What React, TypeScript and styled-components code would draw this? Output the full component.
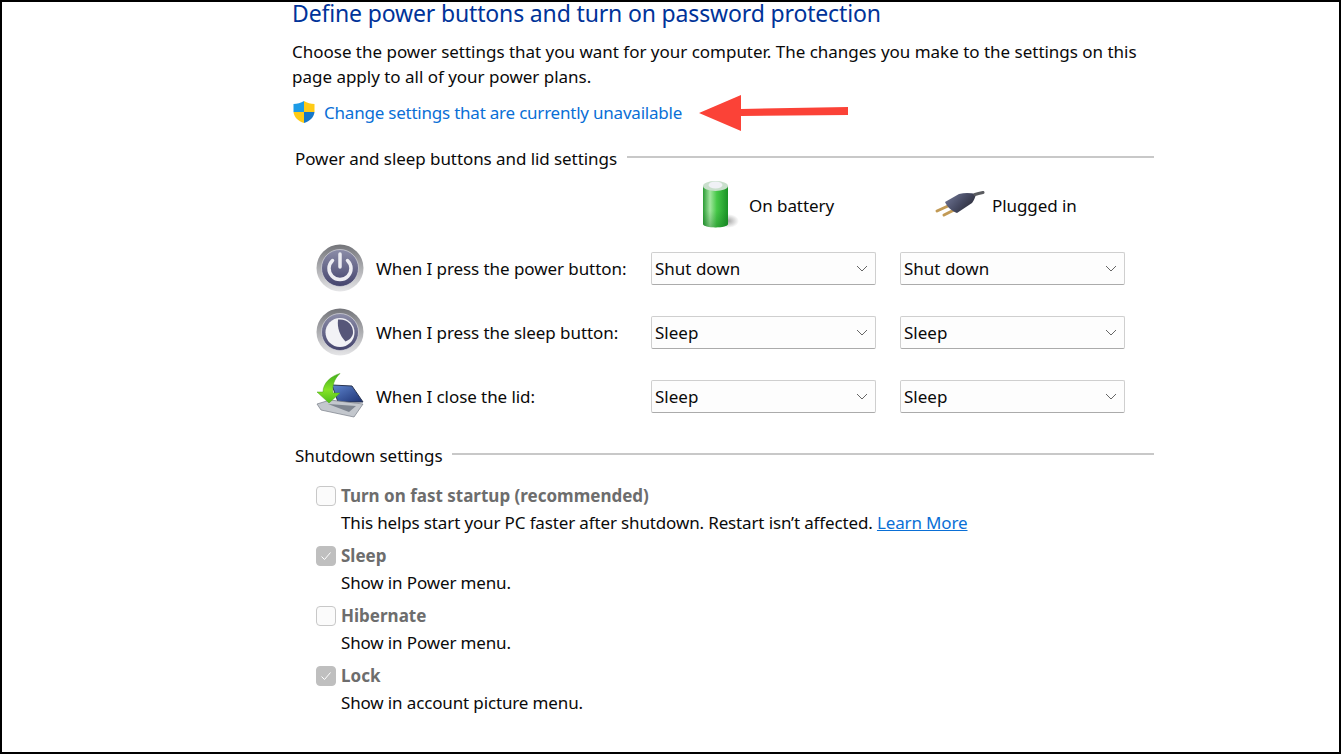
import React from 'react';
import styled, { createGlobalStyle } from 'styled-components';

const GlobalStyle = createGlobalStyle`
  html, body {
    margin: 0;
    padding: 0;
    background: #fff;
  }
  body {
    font-family: "Noto Sans", "Open Sans", "Liberation Sans", sans-serif;
  }
`;

const ShieldIcon = () => (
  <svg width="24" height="24" viewBox="0 0 24 24">
    <path d="M12 1 C9 3 5 4 1.500 4 V12 H12 Z" fill="#1d9be6" />
    <path d="M12 1 C15 3 19 4 22.500 4 V12 H12 Z" fill="#ffcb16" />
    <path d="M1.500 12 C2 17 6 21 12 23 V12 Z" fill="#ffcb16" />
    <path d="M22.500 12 C22 17 18 21 12 23 V12 Z" fill="#1677c9" />
  </svg>
);

const RedArrow = () => (
  <svg width="152" height="38" viewBox="0 0 152 38">
    <path d="M1 19 L43 1 V15 L150 13 V21 L43 22 V37 Z" fill="#fb4237" />
  </svg>
);

const BatteryIcon = () => (
  <svg width="40" height="50" viewBox="0 0 40 50">
    <defs>
      <linearGradient id="batteryBody" x1="0" x2="1" y1="0" y2="0">
        <stop offset="0" stopColor="#2a9c34" />
        <stop offset="0.28" stopColor="#a3e6a0" />
        <stop offset="0.55" stopColor="#46c848" />
        <stop offset="1" stopColor="#1a9226" />
      </linearGradient>
      <linearGradient id="batteryFade" x1="0" x2="0" y1="0" y2="1">
        <stop offset="0.6" stopColor="#0b6b1a" stopOpacity="0" />
        <stop offset="1" stopColor="#0b6b1a" stopOpacity="0.35" />
      </linearGradient>
      <radialGradient id="batteryShadow">
        <stop offset="0" stopColor="#666" stopOpacity="0.6" />
        <stop offset="1" stopColor="#777" stopOpacity="0" />
      </radialGradient>
    </defs>
    <ellipse cx="28" cy="41" rx="11" ry="7" fill="url(#batteryShadow)" />
    <path d="M3 6 V44 C3 48.500 28 48.500 28 44 V6 Z" fill="url(#batteryBody)" />
    <path d="M3 6 V44 C3 48.500 28 48.500 28 44 V6 Z" fill="url(#batteryFade)" />
    <ellipse cx="15.500" cy="6" rx="12.500" ry="5" fill="#c9dfcc" />
    <ellipse cx="15.500" cy="5" rx="7" ry="3.500" fill="#f0f1f6" />
  </svg>
);

const PlugIcon = () => (
  <svg width="50" height="28" viewBox="0 0 50 28">
    <defs>
      <linearGradient id="plugBody" x1="0" x2="1" y1="0.2" y2="0.8">
        <stop offset="0" stopColor="#6f7594" />
        <stop offset="0.5" stopColor="#464a62" />
        <stop offset="1" stopColor="#24252e" />
      </linearGradient>
    </defs>
    <path d="M2 20 L13 15 M9 24 L21 18" stroke="#c29a55" strokeWidth="3" strokeLinecap="round" />
    <path d="M10 11 L24 3 C30 1.500 36 2 41 3 C40 7 39 9 37 12 L22 22 C17 20 12 16 10 11 Z" fill="url(#plugBody)" />
    <path d="M40 3.500 C43 2.500 45.500 2 48 1.500" stroke="#5a5c60" strokeWidth="3" fill="none" strokeLinecap="round" />
  </svg>
);

const ButtonDisc = ({ id, children }: { id: string; children: React.ReactNode }) => (
  <svg width="48" height="48" viewBox="0 0 48 48">
    <defs>
      <linearGradient id={`${id}Ring`} x1="0" x2="0" y1="0" y2="1">
        <stop offset="0" stopColor="#737479" />
        <stop offset="1" stopColor="#e6e6e8" />
      </linearGradient>
      <linearGradient id={`${id}Face`} x1="0" x2="0" y1="0" y2="1">
        <stop offset="0" stopColor="#8c8da8" />
        <stop offset="1" stopColor="#44446d" />
      </linearGradient>
    </defs>
    <circle cx="24" cy="24" r="23.500" fill={`url(#${id}Ring)`} />
    <circle cx="24" cy="24" r="18.500" fill={`url(#${id}Face)`} stroke="#d6d6dc" strokeWidth="0.700" />
    {children}
  </svg>
);

const PowerIcon = () => (
  <ButtonDisc id="power">
    <path
      d="M16.500 16.500 A11 11 0 1 0 31.500 16.500"
      fill="none"
      stroke="#eeeef3"
      strokeWidth="3.500"
      strokeLinecap="round"
    />
    <path d="M24 10 V23" stroke="#eeeef3" strokeWidth="3.500" strokeLinecap="round" />
  </ButtonDisc>
);

const SleepIcon = () => (
  <ButtonDisc id="sleep">
    <circle cx="24" cy="24.500" r="14.500" fill="#f2f2f6" />
    <path d="M22 11.500 C31 10.500 37.500 17 37 25 C36.500 29 33.500 32 29.500 33.500 C24 28 21 20 22 11.500 Z" fill="#565679" />
  </ButtonDisc>
);

const LidIcon = () => (
  <svg width="48" height="46" viewBox="0 0 48 46">
    <defs>
      <linearGradient id="lidScreen" x1="0" x2="1" y1="0" y2="1">
        <stop offset="0" stopColor="#5f86d0" />
        <stop offset="1" stopColor="#1d3272" />
      </linearGradient>
      <linearGradient id="lidArrow" x1="0" x2="0" y1="0" y2="1">
        <stop offset="0" stopColor="#3fae1a" />
        <stop offset="0.55" stopColor="#86e325" />
        <stop offset="1" stopColor="#4fbf18" />
      </linearGradient>
    </defs>
    <path d="M16 12 L36 13 L47 29 L22 29 Z" fill="url(#lidScreen)" stroke="#2a3550" />
    <path d="M1 31 L14 27 L47 31 L38 44 L5 37 Z" fill="#c3c7cd" stroke="#777d87" strokeWidth="0.700" />
    <path d="M12 31 L40 33 L33 39 Z" fill="#7e8590" />
    <path
      d="M24 0.500 C15 3 7 10 7 19 L1 19 L13 30 L24 20 L17 20 C16 13 18 6 24 0.500 Z"
      fill="url(#lidArrow)"
      stroke="#4aa516"
      strokeWidth="0.500"
    />
  </svg>
);

const CheckMark = () => (
  <svg width="12" height="10" viewBox="0 0 12 10">
    <path d="M1.500 5.500 L4.500 8.500 L10.500 1.500" fill="none" stroke="#fff" strokeWidth="1" />
  </svg>
);

const Chevron = () => (
  <svg width="12" height="7" viewBox="0 0 12 7">
    <path d="M1 1 L6 6 L11 1" fill="none" stroke="#666" strokeWidth="1" />
  </svg>
);

const powerRows = [
  { icon: <PowerIcon />, label: 'When I press the power button:', battery: 'Shut down', plugged: 'Shut down' },
  { icon: <SleepIcon />, label: 'When I press the sleep button:', battery: 'Sleep', plugged: 'Sleep' },
  { icon: <LidIcon />, label: 'When I close the lid:', battery: 'Sleep', plugged: 'Sleep' },
];

const shutdownOptions = [
  { title: 'Turn on fast startup (recommended)', checked: false, note: 'This helps start your PC faster after shutdown. Restart isn’t affected. ', link: 'Learn More' },
  { title: 'Sleep', checked: true, note: 'Show in Power menu.' },
  { title: 'Hibernate', checked: false, note: 'Show in Power menu.' },
  { title: 'Lock', checked: true, note: 'Show in account picture menu.' },
];

const App = () => {
  return (
    <Frame>
      <GlobalStyle />
      <Content>
        <Title>Define power buttons and turn on password protection</Title>
        <Intro>
          Choose the power settings that you want for your computer. The changes you make to the settings on this
          page apply to all of your power plans.
        </Intro>
        <ChangeRow>
          <ShieldIcon />
          <ChangeLink>Change settings that are currently unavailable</ChangeLink>
          <ArrowMark>
            <RedArrow />
          </ArrowMark>
        </ChangeRow>

        <SectionHeader>
          <SectionName>Power and sleep buttons and lid settings</SectionName>
          <SectionRule />
        </SectionHeader>

        <ColumnHeads>
          <ColumnHead>
            <BatteryIcon />
            <span>On battery</span>
          </ColumnHead>
          <ColumnHead $plug>
            <PlugIcon />
            <span>Plugged in</span>
          </ColumnHead>
        </ColumnHeads>

        <PowerRows>
          {powerRows.map((row) => (
            <PowerRow key={row.label}>
              <RowIcon>{row.icon}</RowIcon>
              <RowLabel>{row.label}</RowLabel>
              <Select>
                {row.battery}
                <Chevron />
              </Select>
              <Select>
                {row.plugged}
                <Chevron />
              </Select>
            </PowerRow>
          ))}
        </PowerRows>

        <ShutdownHeader>
          <SectionName>Shutdown settings</SectionName>
          <SectionRule />
        </ShutdownHeader>

        <Options>
          {shutdownOptions.map((option) => (
            <Option key={option.title}>
              <OptionTitle>
                <CheckBox $checked={option.checked}>{option.checked && <CheckMark />}</CheckBox>
                {option.title}
              </OptionTitle>
              <OptionNote>
                {option.note}
                {option.link && <LearnMore>{option.link}</LearnMore>}
              </OptionNote>
            </Option>
          ))}
        </Options>
      </Content>
    </Frame>
  );
};

export default App;

const Frame = styled.div`
  box-sizing: border-box;
  width: 1341px;
  height: 754px;
  overflow: hidden;
  background: #fff;
  border: 2px solid #000;
  font-size: 17px;
  letter-spacing: -0.07px;
  color: #0a0a0a;
`;

const Content = styled.div`
  width: 862px;
  margin-left: 290px;
`;

const Title = styled.h1`
  margin: 0;
  height: 24px;
  font-size: 23px;
  line-height: 22px;
  letter-spacing: -0.15px;
  font-weight: 400;
  color: #003399;
`;

const Intro = styled.p`
  margin: 13px 0 0;
  width: 860px;
  line-height: 25px;
  letter-spacing: -0.015px;
`;

const ChangeRow = styled.div`
  position: relative;
  display: flex;
  align-items: center;
  gap: 8px;
  height: 24px;
  margin-top: 11px;
`;

const ChangeLink = styled.span`
  color: #0a6fd6;
  letter-spacing: -0.22px;
`;

const ArrowMark = styled.div`
  position: absolute;
  left: 406px;
  top: -6px;
  line-height: 0;
`;

const SectionHeader = styled.div`
  display: flex;
  align-items: center;
  gap: 10px;
  margin: 22px 0 0 3px;
  height: 24px;
`;

const ShutdownHeader = styled(SectionHeader)`
  margin-top: 23px;
`;

const SectionName = styled.span`
  white-space: nowrap;
`;

const SectionRule = styled.div`
  flex: 1;
  height: 2px;
  margin-bottom: 3px;
  background: #c8c8c8;
`;

const ColumnHeads = styled.div`
  display: grid;
  grid-template-columns: 225px 225px;
  column-gap: 24px;
  margin: 10px 0 0 359px;
  height: 50px;
`;

const ColumnHead = styled.div<{ $plug?: boolean }>`
  display: flex;
  align-items: center;
  gap: ${(p) => (p.$plug ? '7px' : '9px')};
  padding-left: ${(p) => (p.$plug ? '35px' : '49px')};
`;

const PowerRows = styled.div`
  display: flex;
  flex-direction: column;
  gap: 16px;
  margin: 14px 0 0 24px;
`;

const PowerRow = styled.div`
  display: grid;
  grid-template-columns: 48px 287px 225px 225px;
  column-gap: 0;
  align-items: center;
  height: 48px;

  > :last-child {
    margin-left: 24px;
  }
`;

const RowIcon = styled.div`
  line-height: 0;
`;

const RowLabel = styled.div`
  padding: 1px 0 0 12px;
  white-space: nowrap;
`;

const Select = styled.div`
  box-sizing: border-box;
  display: flex;
  align-items: center;
  justify-content: space-between;
  width: 225px;
  height: 33px;
  padding: 0 7px 0 3px;
  background: #fdfdfd;
  border: 1px solid #cfcfcf;
  border-bottom-color: #ababab;
  border-radius: 2px;
  letter-spacing: 0;
`;

const Options = styled.div`
  display: flex;
  flex-direction: column;
  gap: 7px;
  margin: 16px 0 0 24px;
`;

const Option = styled.div`
  display: flex;
  flex-direction: column;
  gap: 2px;
`;

const OptionTitle = styled.div`
  display: flex;
  align-items: center;
  gap: 5px;
  height: 25px;
  font-weight: 700;
  letter-spacing: 0;
  color: #6d6d6d;
`;

const CheckBox = styled.div<{ $checked: boolean }>`
  box-sizing: border-box;
  display: flex;
  align-items: center;
  justify-content: center;
  width: 20px;
  height: 20px;
  background: ${(p) => (p.$checked ? '#bfbfbf' : '#fbfbfb')};
  border: 1px solid ${(p) => (p.$checked ? '#bfbfbf' : '#c8c8c8')};
  border-radius: 4px;
`;

const OptionNote = styled.div`
  padding-left: 25px;
  height: 26px;
  line-height: 26px;
  letter-spacing: -0.14px;
`;

const LearnMore = styled.span`
  color: #0a6fd6;
  text-decoration: underline;
`;
